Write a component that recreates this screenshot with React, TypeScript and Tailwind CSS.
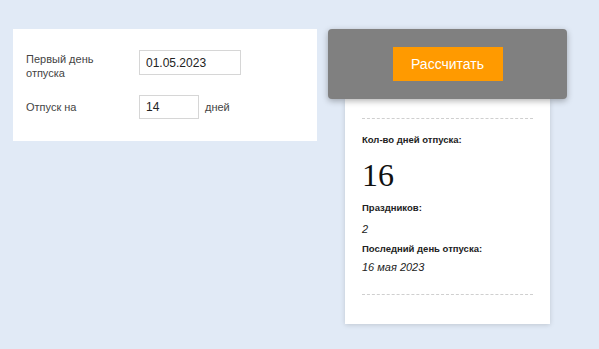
export default function App() {
  return (
    <div className="min-h-[349px] bg-[#e1eaf6] pt-[29px] pl-[13px] font-['Liberation_Sans',Arial,sans-serif]">
      <div className="flex items-start gap-[11px]">
        <div className="w-[304px] bg-white pl-[13px] pt-[21px] pb-[22px]">
          <div className="flex h-[25px] items-start">
            <label className="w-[113px] pt-[2px] text-[11px] leading-[14px] text-[#444]">
              Первый день
              <br />
              отпуска
            </label>
            <input
              readOnly
              value="01.05.2023"
              className="h-[25px] w-[102px] border border-[#d6d6d6] px-[6px] text-[12px] text-[#222] outline-none"
            />
          </div>
          <div className="mt-[20px] flex items-center">
            <label className="w-[113px] text-[11px] leading-[14px] text-[#444]">Отпуск на</label>
            <input
              readOnly
              value="14"
              className="h-[24px] w-[60px] border border-[#d6d6d6] px-[6px] text-[12px] text-[#222] outline-none"
            />
            <span className="ml-[6px] text-[11px] text-[#444]">дней</span>
          </div>
        </div>

        <div className="flex w-[239px] flex-col items-center">
          <div className="relative z-10 flex h-[70px] w-full items-center justify-center rounded-[4px] bg-[#808080] shadow-[0_2px_6px_rgba(0,0,0,0.3)]">
            <button className="h-[34px] w-[110px] bg-[#ff9a00] text-[14px] text-white">Рассчитать</button>
          </div>
          <div className="w-[205px] bg-white px-[17px] pt-[19px] pb-[29px] shadow-[0_1px_5px_rgba(0,0,0,0.15)]">
            <div className="border-t border-dashed border-[#cfcfcf]" />
            <div className="mt-[15px] text-[9.5px] font-bold leading-[12px] text-[#222]">Кол-во дней отпуска:</div>
            <div className="mt-[11px] font-['Liberation_Serif','Times_New_Roman',serif] text-[32px] leading-[36px] text-[#111]">
              16
            </div>
            <div className="mt-[9px] text-[9.5px] font-bold leading-[12px] text-[#222]">Праздников:</div>
            <div className="mt-[8px] text-[11px] italic leading-[14px] text-[#222]">2</div>
            <div className="mt-[7px] text-[9.5px] font-bold leading-[12px] text-[#222]">Последний день отпуска:</div>
            <div className="mt-[5px] text-[11px] italic leading-[14px] text-[#222]">16 мая 2023</div>
            <div className="mt-[20px] border-t border-dashed border-[#cfcfcf]" />
          </div>
        </div>
      </div>
    </div>
  )
}
